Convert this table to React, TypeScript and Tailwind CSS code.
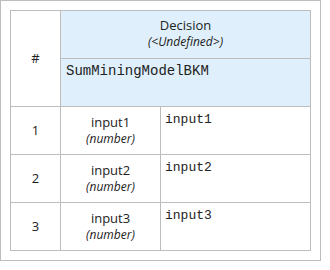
import React from "react";

const sans = { fontFamily: '"Open Sans", "Noto Sans", sans-serif' };
const mono = { fontFamily: '"Liberation Mono", "Courier New", monospace' };

const rows = [
  { n: "1", name: "input1" },
  { n: "2", name: "input2" },
  { n: "3", name: "input3" },
];

export default function App() {
  return (
    <div className="w-[330px] h-[270px] bg-white" style={sans}>
      <div className="w-[321px] h-[261px] border border-[#bdbdbd] p-[9px] box-border">
        <div className="grid grid-cols-[50px_100px_150px] grid-rows-[48px_48px_48px_48px_48px] border-l border-t border-[#bdbdbd] text-[#222] w-[301px]">
          <div className="row-span-2 border-r border-b border-[#bdbdbd] flex items-center justify-center text-[13px]">
            #
          </div>
          <div className="col-span-2 border-r border-b border-[#bdbdbd] bg-[#dff0fc] flex flex-col items-center pt-[5px]">
            <div className="text-[13px] leading-[18px]">Decision</div>
            <div className="text-[12px] leading-[15px] italic">(&lt;Undefined&gt;)</div>
          </div>
          <div className="col-span-2 border-r border-b border-[#bdbdbd] bg-[#dff0fc] pl-[5px] pt-[4px]">
            <div className="text-[14px] leading-[16px]" style={mono}>SumMiningModelBKM</div>
          </div>
          {rows.map((r) => (
            <React.Fragment key={r.n}>
              <div className="border-r border-b border-[#bdbdbd] flex items-center justify-center text-[13px]">
                {r.n}
              </div>
              <div className="border-r border-b border-[#bdbdbd] flex flex-col items-center pt-[6px]">
                <div className="text-[13px] leading-[18px]">{r.name}</div>
                <div className="text-[12px] leading-[15px] italic">(number)</div>
              </div>
              <div className="border-r border-b border-[#bdbdbd] pl-[4px] pt-[5px]">
                <div className="text-[13px] leading-[16px]" style={mono}>{r.name}</div>
              </div>
            </React.Fragment>
          ))}
        </div>
      </div>
    </div>
  );
}
